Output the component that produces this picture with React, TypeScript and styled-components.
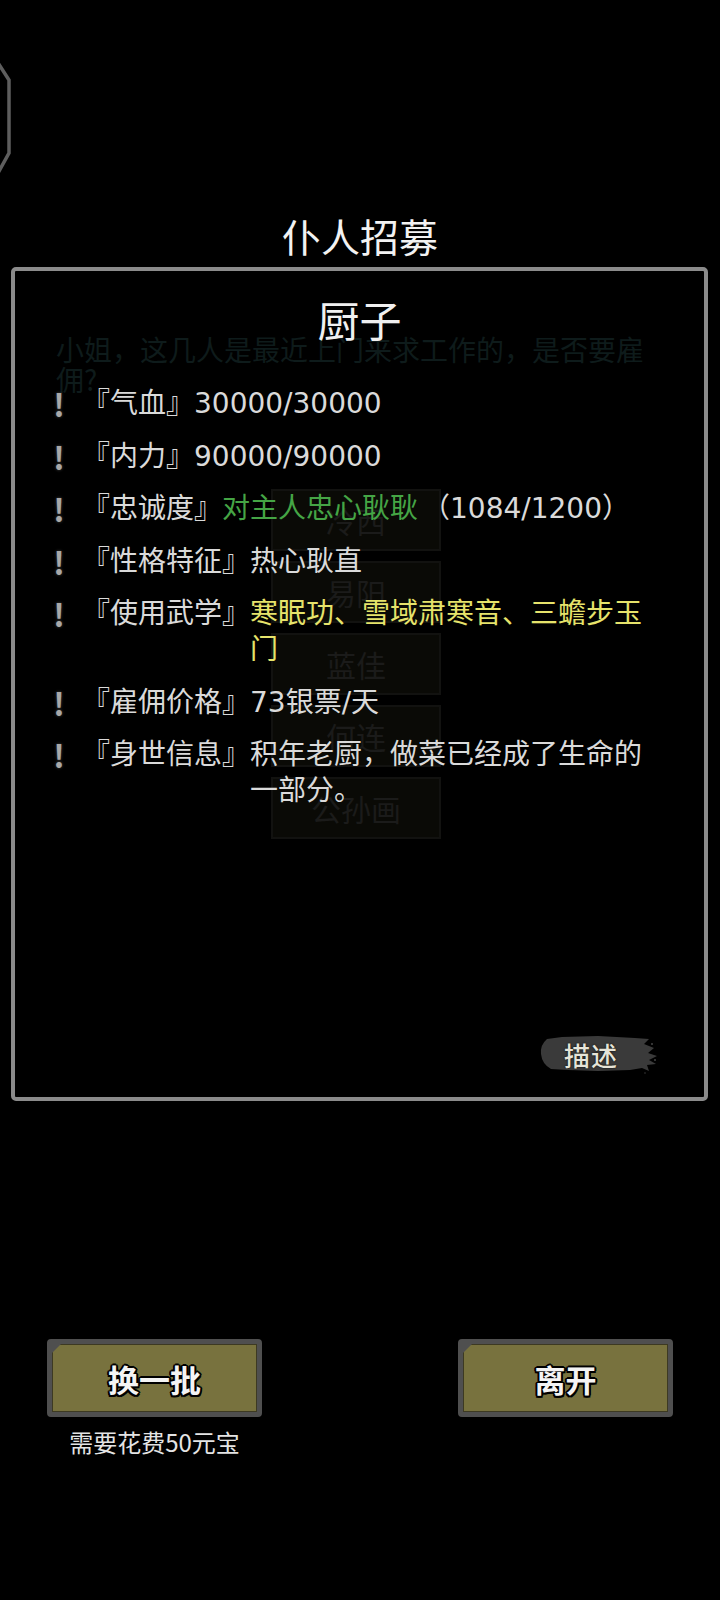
import styled, { createGlobalStyle } from "styled-components";

const GlobalStyle = createGlobalStyle`
  html, body {
    margin: 0;
    padding: 0;
    background: #000;
  }
  body {
    font-family: "Noto Sans CJK SC", "Noto Sans", sans-serif;
    text-spacing-trim: space-all;
  }
`;

// page shell
const Screen = styled.div`
  position: relative;
  width: 720px;
  height: 1600px;
  background: #000;
  overflow: hidden;
  display: flex;
  flex-direction: column;
  align-items: stretch;
`;

const SideBadge = styled.svg`
  position: absolute;
  left: 0;
  top: 58px;
`;

const Title = styled.h1`
  margin: 211px 0 0;
  font-size: 39px;
  font-weight: 400;
  line-height: 48px;
  height: 48px;
  text-align: center;
  color: #f2f2f2;
`;

const Panel = styled.section`
  position: relative;
  box-sizing: border-box;
  margin: 8px 12px 0 11px;
  height: 834px;
  border: 4px solid #8b8b8b;
  border-radius: 5px;
  background: #000;
  display: flex;
  flex-direction: column;
`;

// faded dialog behind the overlay
const BehindLayer = styled.div`
  position: absolute;
  inset: 0;
  pointer-events: none;
  z-index: 0;
`;

const BehindText = styled.p`
  position: absolute;
  left: 41px;
  top: 63px;
  width: 600px;
  margin: 0;
  font-size: 28px;
  line-height: 30px;
  color: #0e1b1b;
`;

const BehindList = styled.div`
  position: absolute;
  left: 256px;
  top: 218px;
  width: 170px;
  display: flex;
  flex-direction: column;
  gap: 10px;
`;

const BehindItem = styled.div`
  height: 62px;
  border: 2px solid #121210;
  background: #0a0a06;
  box-sizing: border-box;
  display: flex;
  align-items: center;
  justify-content: center;
  font-size: 30px;
  color: #1b1b1a;
`;

const Content = styled.div`
  position: relative;
  z-index: 1;
  flex: 1;
  display: flex;
  flex-direction: column;
  padding: 26px 0 22px;
`;

const Heading = styled.h2`
  margin: 0;
  font-size: 42px;
  font-weight: 400;
  line-height: 44px;
  text-align: center;
  color: #f0f0f0;
`;

const Rows = styled.div`
  margin-top: 45px;
  padding: 0 44px 0 32px;
  display: flex;
  flex-direction: column;
  gap: 16.5px;
`;

const Row = styled.div`
  display: flex;
  align-items: flex-start;
  font-family: "DejaVu Sans", "Noto Sans CJK SC", sans-serif;
  font-size: 28px;
  line-height: 36px;
  color: #dadada;
`;

const Bang = styled.span`
  flex: 0 0 24px;
  margin-right: 11px;
  text-align: center;
  font-family: "Noto Sans CJK SC", sans-serif;
  font-size: 31px;
  font-weight: 700;
  color: #a8a8a8;
  text-shadow: 0 0 3px #4a4a4a;
`;

const Label = styled.span`
  flex: 0 0 auto;
  white-space: nowrap;
`;

const Value = styled.span`
  flex: 1;
  min-width: 0;
`;

const Tone = styled.span<{ $tone: "green" | "yellow" }>`
  color: ${(p) => (p.$tone === "green" ? "#45a545" : "#e6e36b")};
`;

const Ratio = styled.span`
  margin-left: 4px;
`;

const BrushButton = styled.button`
  position: relative;
  margin-top: auto;
  align-self: flex-end;
  margin-right: 46px;
  width: 120px;
  height: 42px;
  padding: 0;
  border: 0;
  background: transparent;
  font-family: "Noto Sans CJK SC", sans-serif;
  font-size: 26px;
  font-weight: 500;
  color: #e6e4d8;
  letter-spacing: 1px;
  text-shadow: 0 0 2px #000;
  svg {
    position: absolute;
    inset: 0;
    z-index: -1;
  }
  span {
    position: relative;
    margin-right: 14px;
  }
`;

const Footer = styled.div`
  margin-top: 238px;
  display: flex;
  justify-content: space-between;
  padding: 0 47px;
`;

const ActionCol = styled.div`
  display: flex;
  flex-direction: column;
  align-items: center;
`;

const ActionButton = styled.button`
  position: relative;
  box-sizing: border-box;
  width: 215px;
  height: 78px;
  border: 5px solid #4f4f4f;
  border-radius: 4px;
  background: #78723e;
  box-shadow: inset 0 0 0 1px #3d3a22;
  font-family: "Noto Sans CJK SC", sans-serif;
  font-size: 31px;
  font-weight: 700;
  color: #f4f4f4;
  text-shadow: 2px 0 0 #000, -2px 0 0 #000, 0 2px 0 #000, 0 -2px 0 #000,
    1.5px 1.5px 0 #000, -1.5px 1.5px 0 #000, 1.5px -1.5px 0 #000,
    -1.5px -1.5px 0 #000;
  &::before {
    content: "";
    position: absolute;
    left: 0;
    top: 0;
    border-style: solid;
    border-width: 9px 9px 0 0;
    border-color: #4f4f4f transparent transparent transparent;
  }
`;

const Cost = styled.div`
  margin-top: 10px;
  font-size: 24px;
  line-height: 30px;
  color: #e4e4e4;
`;

const stats = [
  { label: "『气血』", value: <>30000/30000</> },
  { label: "『内力』", value: <>90000/90000</> },
  {
    label: "『忠诚度』",
    value: (
      <>
        <Tone $tone="green">对主人忠心耿耿</Tone>
        <Ratio>（1084/1200）</Ratio>
      </>
    ),
  },
  { label: "『性格特征』", value: <>热心耿直</> },
  {
    label: "『使用武学』",
    value: <Tone $tone="yellow">寒眠功、雪域肃寒音、三蟾步玉门</Tone>,
  },
  { label: "『雇佣价格』", value: <>73银票/天</> },
  { label: "『身世信息』", value: <>积年老厨，做菜已经成了生命的一部分。</> },
];

const behindNames = ["冷西", "易阳", "蓝佳", "何连", "公孙画"];

export default function App() {
  return (
    <Screen>
      <GlobalStyle />
      <SideBadge width="14" height="120" viewBox="0 0 14 120">
        <polyline
          points="-2,5 9,22 9,95 -2,115"
          fill="none"
          stroke="#5e5e5e"
          strokeWidth="3.5"
        />
      </SideBadge>

      <Title>仆人招募</Title>

      <Panel>
        <BehindLayer>
          <BehindText>小姐，这几人是最近上门来求工作的，是否要雇佣?</BehindText>
          <BehindList>
            {behindNames.map((n) => (
              <BehindItem key={n}>{n}</BehindItem>
            ))}
          </BehindList>
        </BehindLayer>

        <Content>
          <Heading>厨子</Heading>
          <Rows>
            {stats.map((s) => (
              <Row key={s.label}>
                <Bang>!</Bang>
                <Label>{s.label}</Label>
                <Value>{s.value}</Value>
              </Row>
            ))}
          </Rows>

          <BrushButton>
            <svg width="120" height="42" viewBox="0 0 120 42">
              <path
                d="M9 6 Q2 12 3 21 Q4 31 13 36 L30 37 L60 38 L92 37 L104 35 L111 38 L109 32 L118 31 L111 27 L119 23 L110 20 L116 15 L106 11 L111 6 L97 5 L60 3 L24 4 Z"
                fill="#3a3a3a"
              />
              <circle cx="114" cy="11" r="1" fill="#454545" />
              <circle cx="117" cy="27" r="1" fill="#454545" />
              <circle cx="107" cy="40" r="0.8" fill="#3a3a3a" />
            </svg>
            <span>描述</span>
          </BrushButton>
        </Content>
      </Panel>

      <Footer>
        <ActionCol>
          <ActionButton>换一批</ActionButton>
          <Cost>需要花费50元宝</Cost>
        </ActionCol>
        <ActionCol>
          <ActionButton>离开</ActionButton>
        </ActionCol>
      </Footer>
    </Screen>
  );
}
